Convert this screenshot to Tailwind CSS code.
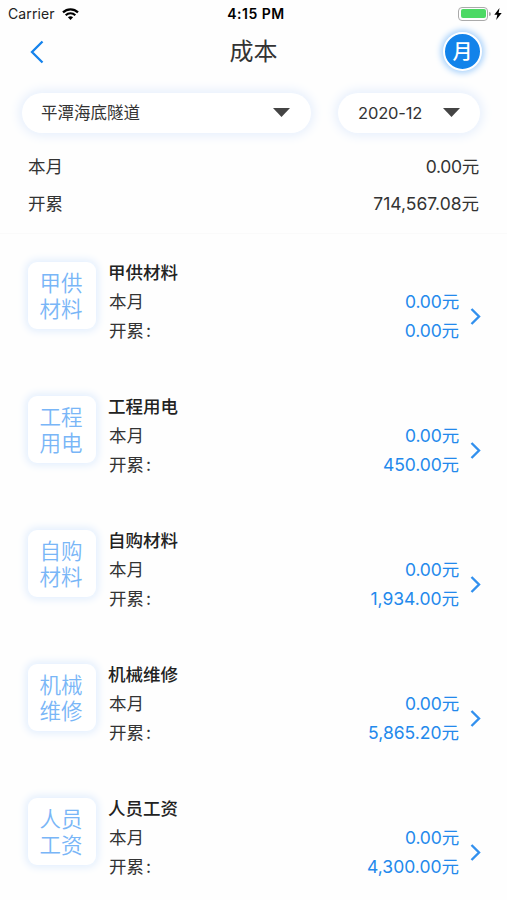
<!DOCTYPE html>
<html lang="zh-CN">
<head>
<meta charset="utf-8">
<title>成本</title>
<script src="https://cdn.jsdelivr.net/npm/@tailwindcss/browser@4"></script>
</head>
<body class="bg-white">
<div class="w-[507px] h-[900px] overflow-hidden flex flex-col bg-[#fefefe] text-[#333] font-[Inter,'Noto_Sans_CJK_SC',sans-serif] text-[17.5px]">
  <header class="h-[27px] shrink-0 grid grid-cols-3 items-center px-[8px] text-black text-[14px]">
    <div class="flex items-center gap-[7px] text-[#222]"><span class="text-[14px] tracking-[0.1px]">Carrier</span>
      <svg class="w-[17px] h-[12px]" viewBox="0 0 17 12" fill="none" stroke="#000" stroke-width="2.2"><path d="M1 4.4C5.2.3 11.8.3 16 4.4M3.7 7.2c2.7-2.6 6.900-2.600 9.600 0"/><path d="M8.500 12 5.900 9.200c1.500-1.400 3.700-1.400 5.200 0Z" fill="#000" stroke="none"/></svg>
    </div>
    <div class="text-center font-semibold text-[14px] tracking-[0.5px] pl-[5px]">4:15 PM</div>
    <div class="flex justify-end items-center -mr-[3px]">
      <div class="w-[30px] h-[14px] rounded-[4px] border border-[#aaa] p-[1.500px] flex"><div class="flex-1 rounded-[2px] bg-[#4cd964]"></div></div>
      <div class="w-[2px] h-[4px] rounded-r bg-[#aaa] ml-px"></div>
      <svg class="w-[8px] h-[12px] ml-[3px]" viewBox="0 0 8 12"><path d="M5.500 0 .3 6.800h3L2.200 12 7.700 5h-3.100Z"/></svg>
    </div>
  </header>
  <nav class="h-[49px] shrink-0 flex items-center justify-between pl-[30px] pr-[25px]">
    <svg class="w-[14px] h-[24px] mr-[20px]" viewBox="0 0 14 24" fill="none" stroke="#1583ec" stroke-width="2.300"><path d="M12.500 1.500 2 12l10.500 10.500"/></svg>
    <h1 class="text-[24px] leading-[48px]">成本</h1>
    <div class="w-[39px] h-[39px] rounded-full border-2 border-white bg-[#1283ea] text-white text-[20px] font-medium flex items-center justify-center shadow-[0_0_6px_2px_#a3cffb]">月</div>
  </nav>
  <div class="shrink-0 flex gap-[27px] pl-[22px] pt-[17px] text-[16.500px]">
    <div class="w-[289px] h-[40px] rounded-full bg-white shadow-[0_0_12px_2px_#e3edfc] flex items-center justify-between pl-[19px] pr-[21px]"><span>平潭海底隧道</span><svg class="w-[17px] h-[9px] -mt-[2px]" viewBox="0 0 17 9"><path d="M0 0h17L8.500 9Z" fill="#444"/></svg></div>
    <div class="w-[142px] h-[40px] rounded-full bg-white shadow-[0_0_12px_2px_#e3edfc] flex items-center justify-between pl-[20px] pr-[20px]"><span class="tracking-[-0.15px]">2020-12</span><svg class="w-[17px] h-[9px] -mt-[2px]" viewBox="0 0 17 9"><path d="M0 0h17L8.500 9Z" fill="#444"/></svg></div>
  </div>
  <section class="shrink-0 px-[28px] pt-[15px] h-[101px] leading-[37px] border-b border-[#fafafa]">
    <div class="flex justify-between"><span>本月</span><span class="tracking-[-0.3px]">0.00元</span></div>
    <div class="flex justify-between"><span>开累</span><span>714,567.08元</span></div>
  </section>
  <main class="pt-[23px] leading-[29.500px]">
    <article class="h-[134px] flex items-start pl-[28px] pr-[26px]">
      <div class="w-[68px] h-[67px] mt-[5px] mr-[13px] rounded-[9px] bg-white shadow-[0_0_9px_2px_#e0edfd] text-[#79b6f7] font-[350] text-[21.500px] leading-[26px] text-center pl-[11px] pr-[13px] pt-[8px]">甲供材料</div>
      <div class="flex-1"><h2 class="font-medium text-[#222] pt-px -mb-px -ml-px">甲供材料</h2><div class="flex justify-between"><span>本月</span><span class="text-[#2389ec] tracking-[-0.15px]">0.00元</span></div><div class="flex justify-between"><span>开累<span class="ml-[2px]">:</span></span><span class="text-[#2389ec] tracking-[-0.1px]">0.00元</span></div></div>
      <svg class="w-[11px] h-[17px] mt-[51px] ml-[11px]" viewBox="0 0 11 17" fill="none" stroke="#3290ee" stroke-width="2.400"><path d="m1.500 1 7.500 7.500L1.500 16"/></svg>
    </article>
    <article class="h-[134px] flex items-start pl-[28px] pr-[26px]">
      <div class="w-[68px] h-[67px] mt-[5px] mr-[13px] rounded-[9px] bg-white shadow-[0_0_9px_2px_#e0edfd] text-[#79b6f7] font-[350] text-[21.500px] leading-[26px] text-center pl-[11px] pr-[13px] pt-[8px]">工程用电</div>
      <div class="flex-1"><h2 class="font-medium text-[#222] pt-px -mb-px -ml-px">工程用电</h2><div class="flex justify-between"><span>本月</span><span class="text-[#2389ec] tracking-[-0.15px]">0.00元</span></div><div class="flex justify-between"><span>开累<span class="ml-[2px]">:</span></span><span class="text-[#2389ec] tracking-[-0.1px]">450.00元</span></div></div>
      <svg class="w-[11px] h-[17px] mt-[51px] ml-[11px]" viewBox="0 0 11 17" fill="none" stroke="#3290ee" stroke-width="2.400"><path d="m1.500 1 7.500 7.500L1.500 16"/></svg>
    </article>
    <article class="h-[134px] flex items-start pl-[28px] pr-[26px]">
      <div class="w-[68px] h-[67px] mt-[5px] mr-[13px] rounded-[9px] bg-white shadow-[0_0_9px_2px_#e0edfd] text-[#79b6f7] font-[350] text-[21.500px] leading-[26px] text-center pl-[11px] pr-[13px] pt-[8px]">自购材料</div>
      <div class="flex-1"><h2 class="font-medium text-[#222] pt-px -mb-px -ml-px">自购材料</h2><div class="flex justify-between"><span>本月</span><span class="text-[#2389ec] tracking-[-0.15px]">0.00元</span></div><div class="flex justify-between"><span>开累<span class="ml-[2px]">:</span></span><span class="text-[#2389ec]">1,934.00元</span></div></div>
      <svg class="w-[11px] h-[17px] mt-[51px] ml-[11px]" viewBox="0 0 11 17" fill="none" stroke="#3290ee" stroke-width="2.400"><path d="m1.500 1 7.500 7.500L1.500 16"/></svg>
    </article>
    <article class="h-[134px] flex items-start pl-[28px] pr-[26px]">
      <div class="w-[68px] h-[67px] mt-[5px] mr-[13px] rounded-[9px] bg-white shadow-[0_0_9px_2px_#e0edfd] text-[#79b6f7] font-[350] text-[21.500px] leading-[26px] text-center pl-[11px] pr-[13px] pt-[8px]">机械维修</div>
      <div class="flex-1"><h2 class="font-medium text-[#222] pt-px -mb-px -ml-px">机械维修</h2><div class="flex justify-between"><span>本月</span><span class="text-[#2389ec] tracking-[-0.15px]">0.00元</span></div><div class="flex justify-between"><span>开累<span class="ml-[2px]">:</span></span><span class="text-[#2389ec]">5,865.20元</span></div></div>
      <svg class="w-[11px] h-[17px] mt-[51px] ml-[11px]" viewBox="0 0 11 17" fill="none" stroke="#3290ee" stroke-width="2.400"><path d="m1.500 1 7.500 7.500L1.500 16"/></svg>
    </article>
    <article class="h-[134px] flex items-start pl-[28px] pr-[26px]">
      <div class="w-[68px] h-[67px] mt-[5px] mr-[13px] rounded-[9px] bg-white shadow-[0_0_9px_2px_#e0edfd] text-[#79b6f7] font-[350] text-[21.500px] leading-[26px] text-center pl-[11px] pr-[13px] pt-[8px]">人员工资</div>
      <div class="flex-1"><h2 class="font-medium text-[#222] pt-px -mb-px -ml-px">人员工资</h2><div class="flex justify-between"><span>本月</span><span class="text-[#2389ec] tracking-[-0.15px]">0.00元</span></div><div class="flex justify-between"><span>开累<span class="ml-[2px]">:</span></span><span class="text-[#2389ec]">4,300.00元</span></div></div>
      <svg class="w-[11px] h-[17px] mt-[51px] ml-[11px]" viewBox="0 0 11 17" fill="none" stroke="#3290ee" stroke-width="2.400"><path d="m1.500 1 7.500 7.500L1.500 16"/></svg>
    </article>
  </main>
</div>
</body>
</html>
